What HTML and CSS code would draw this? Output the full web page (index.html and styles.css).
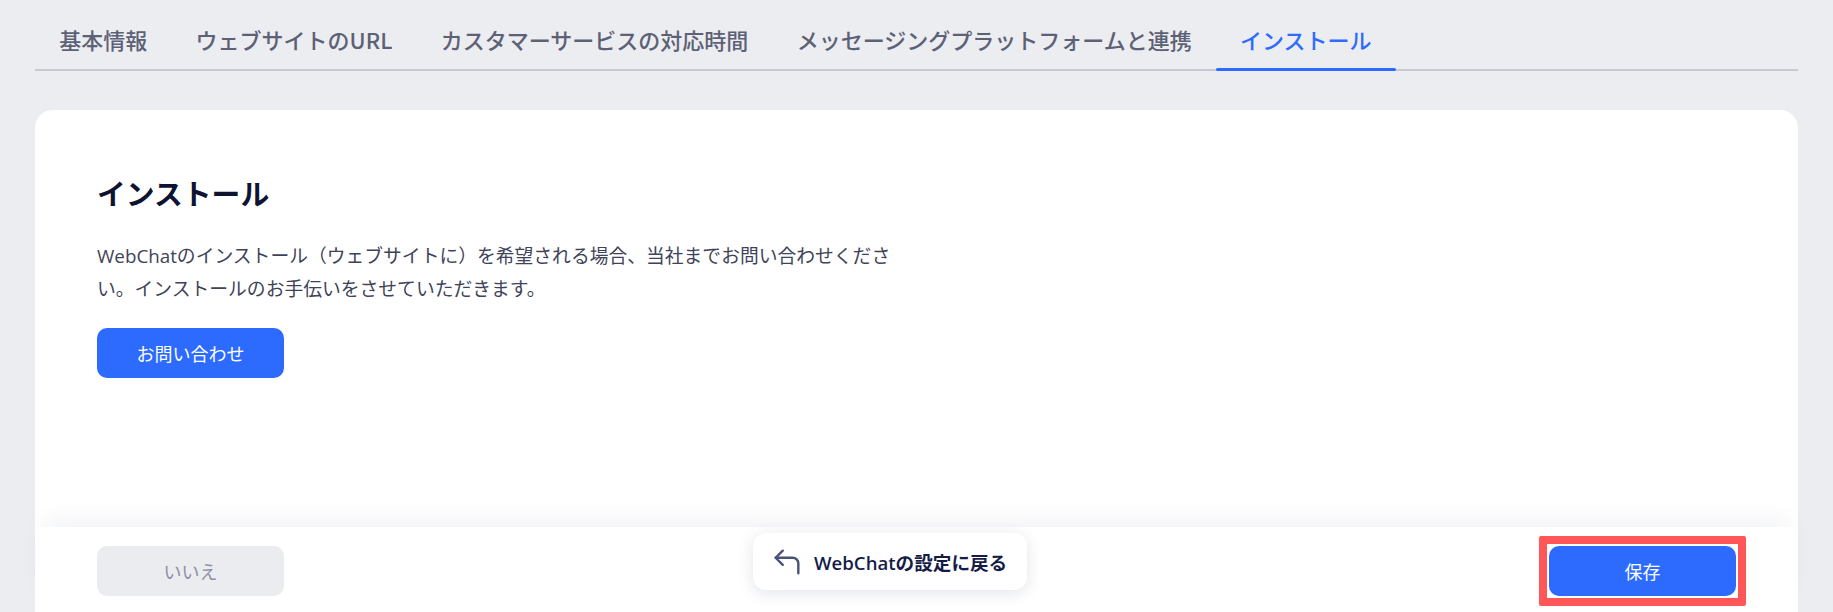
FILE: index.html
```html
<!DOCTYPE html>
<html lang="ja">
<head>
  <meta charset="UTF-8">
  <meta name="viewport" content="width=device-width, initial-scale=1.0">
  <title>インストール</title>
  <link rel="stylesheet" href="styles.css">
</head>
<body>

  <div class="page">
    <!-- Settings tabs -->
    <nav class="tabs">
      <a class="tab">基本情報</a>
      <a class="tab">ウェブサイトのURL</a>
      <a class="tab">カスタマーサービスの対応時間</a>
      <a class="tab">メッセージングプラットフォームと連携</a>
      <a class="tab active">インストール</a>
    </nav>

    <!-- Install card -->
    <div class="card">
      <div class="card-body">
        <h1 class="title">インストール</h1>
        <p class="desc">WebChatのインストール（ウェブサイトに）を希望される場合、当社までお問い合わせください。インストールのお手伝いをさせていただきます。</p>
        <button class="btn btn-primary">お問い合わせ</button>
      </div>

      <div class="card-footer">
        <button class="btn btn-muted">いいえ</button>

        <button class="back-pill">
          <svg class="back-icon" viewBox="0 0 24 24" width="36" height="34">
            <polyline points="9 14 4 9 9 4"></polyline>
            <path d="M20 20v-7a4 4 0 0 0-4-4H4"></path>
          </svg>
          <span>WebChatの設定に戻る</span>
        </button>

        <!-- highlighted save action -->
        <div class="highlight">
          <button class="btn btn-primary">保存</button>
        </div>
      </div>
    </div>
  </div>

</body>
</html>
```

FILE: styles.css
```css
/* General */
body {
  margin: 0;
  background-color: #ecedf1;
  font-family: "Open Sans", "Noto Sans CJK JP", sans-serif;
  overflow: hidden;
}

.page {
  height: 612px;
  padding: 0 35px;
  display: flex;
  flex-direction: column;
}

/* Tabs */
.tabs {
  display: flex;
  border-bottom: 2px solid #c9cad1;
}

.tab {
  position: relative;
  padding: 24px 24.2px 17px;
  margin-bottom: -2px;
  font-family: "Noto Sans CJK JP", sans-serif;
  font-size: 22px;
  font-weight: 500;
  line-height: 30px;
  color: #5d6175;
  cursor: pointer;
}

.tab.active {
  color: #2d6bff;
}

.tab.active::after {
  content: "";
  position: absolute;
  left: 0;
  right: 0;
  bottom: 0;
  height: 3.5px;
  border-radius: 2px;
  background-color: #2d6bff;
}

/* Card */
.card {
  flex: 1;
  margin-top: 39px;
  background: #fff;
  border-radius: 18px 18px 0 0;
  display: flex;
  flex-direction: column;
}

.card-body {
  flex: 1;
  padding: 63px 62px 0;
}

.title {
  margin: 0;
  font-family: "Noto Sans CJK JP", sans-serif;
  font-size: 28.8px;
  font-weight: 700;
  line-height: 40px;
  color: #0d1331;
}

.desc {
  margin: 27px 0 22px;
  max-width: 805px;
  font-size: 18.8px;
  line-height: 33px;
  color: #3f4359;
}

/* Buttons */
.btn {
  width: 187px;
  height: 50px;
  border: none;
  border-radius: 10px;
  font-family: "Open Sans", "Noto Sans CJK JP", sans-serif;
  font-size: 18px;
  cursor: pointer;
}

.btn-primary {
  background-color: #2d6bff;
  color: #fff;
}

.btn-muted {
  background-color: #ebecf0;
  color: #8b8fa3;
}

.highlight {
  margin: -10px;
  padding: 2px;
  border: 8px solid #ff5757;
  border-radius: 2px;
  line-height: 0;
}

/* Footer */
.card-footer {
  position: relative;
  height: 66px;
  padding: 19px 62px 0;
  display: flex;
  justify-content: space-between;
  align-items: flex-start;
  background: #fff;
  box-shadow: 0 -14px 26px -10px rgba(30, 40, 80, 0.07);
}

.back-pill {
  position: absolute;
  left: 718px;
  top: 6px;
  height: 57px;
  display: flex;
  align-items: center;
  gap: 9px;
  padding: 0 20px 0 16px;
  border: none;
  border-radius: 13px;
  background: #fff;
  box-shadow: 0 3px 16px rgba(20, 30, 70, 0.12);
  font-family: "Open Sans", "Noto Sans CJK JP", sans-serif;
  font-size: 18.6px;
  font-weight: 600;
  white-space: nowrap;
  color: #161c48;
  cursor: pointer;
}

.back-icon {
  fill: none;
  stroke: #4b5278;
  stroke-width: 1.7;
  stroke-linecap: round;
  stroke-linejoin: round;
}
```
